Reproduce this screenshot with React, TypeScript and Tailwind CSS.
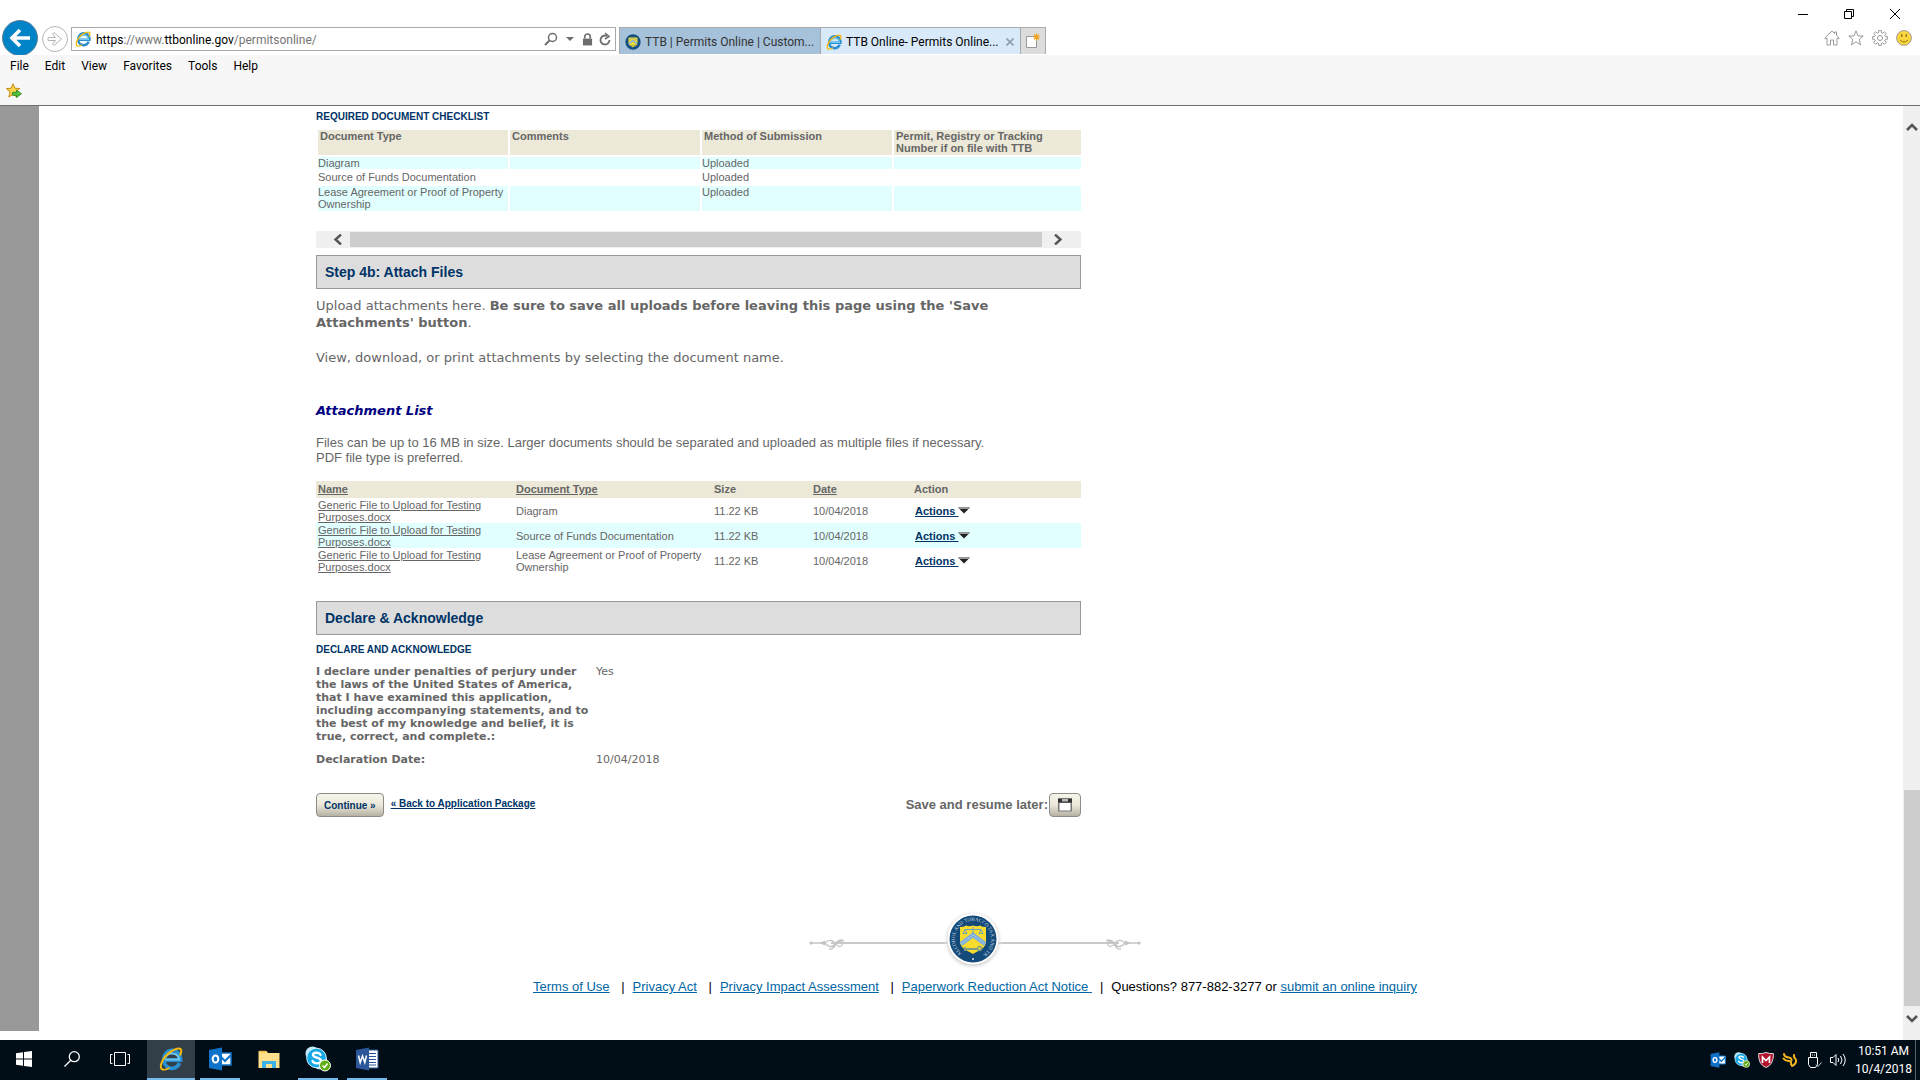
import React from "react";

const ARIAL = "font-['Liberation_Sans',Arial,sans-serif]";
const VERDANA = "font-['DejaVu_Sans',Verdana,sans-serif]";
const UI = "font-['Roboto','Segoe_UI',sans-serif]";

function IeLogo({ className }: { className: string }) {
  return (
    <svg viewBox="0 0 24 24" className={className} aria-hidden="true">
      <path d="M6 13.2h15.600a8.200 8.200 0 0 0-.1-2.200A8 8 0 0 0 5 12.500a8 8 0 0 0 15.500 3.500" fill="none" stroke="#2a8fd0" strokeWidth="3.800" />
      <path d="M6.200 12.600h14a7.300 7.300 0 0 0-14-1.600" fill="none" stroke="#6cc8f3" strokeWidth="2" />
      <path d="M3.200 22.300C.3 20.500 2.300 13.500 7.600 8 13 2.500 19.900.4 21.700 2.300c1 1.100.6 3.200-.5 5.400" fill="none" stroke="#f5b90d" strokeWidth="2" strokeLinecap="round" />
      <path d="M3.200 22.300c1.600 1 4.500.1 6.800-1.300" fill="none" stroke="#f5b90d" strokeWidth="1.600" strokeLinecap="round" />
    </svg>
  );
}

function SealShield() {
  return (
    <g>
      <path d="M-13-12q4 0 6-1.500 3 1.500 7 0 4 1.500 7 0 2 1.500 6 1.500v14C13 9 7 11 0 15-7 11-13 9-13 2z" fill="#f7dc2e" />
      <path d="M-12 5 0-4 12 5" fill="none" stroke="#7fb0dc" strokeWidth="4.500" />
      <path d="M-12 5 0-4 12 5" fill="none" stroke="#e8eef2" strokeWidth="1" strokeDasharray="1 2" />
      <path d="M0-12v7M-8-9.500H8M-8-9.500l-2 4h4zM8-9.500l-2 4h4z" fill="none" stroke="#6fa0bd" strokeWidth="1" />
      <path d="M-8 10H5M-8 8v4" stroke="#7f9c86" strokeWidth="1.800" />
      <circle cx="6.500" cy="9.500" r="2" fill="none" stroke="#7f9c86" strokeWidth="1.400" />
    </g>
  );
}

function SmallSeal() {
  return (
    <svg viewBox="-23 -23 46 46" className="h-4 w-4 shrink-0" aria-hidden="true">
      <circle r="22" fill="#15507e" />
      <SealShield />
    </svg>
  );
}

function FooterOrnament() {
  return (
    <svg viewBox="0 0 332 64" className="h-16 w-[332px]" role="img" aria-label="Alcohol and Tobacco Tax and Trade Bureau seal">
      <defs>
        <radialGradient id="halo">
          <stop offset="0.780" stopColor="#bbb" />
          <stop offset="1" stopColor="#fff" stopOpacity="0" />
        </radialGradient>
        <path id="ring" d="M-11 14.500A18.200 18.200 0 1 1 11 14.500" />
      </defs>
      <path d="M22 36H310" stroke="#c9c9c9" strokeWidth="2" />
      {[0, 1].map((side) => (
        <g key={side} transform={side ? "translate(332 0) scale(-1 1)" : undefined} fill="none" stroke="#c4c4c4">
          <circle cx="2" cy="36" r="1.500" fill="#bbb" stroke="none" />
          <path d="M2 36h14" strokeWidth="1.500" />
          <path d="M10 36l6-2.500v5z" fill="#c4c4c4" stroke="none" />
          <path d="M16 36c4-4 8-3 10 0s5 5 7 2-2-5-5-2-3 7-8 6M16 36c3 4 7 5 10 1s5-5 9-3" strokeWidth="1.300" />
        </g>
      ))}
      <g transform="translate(164 32)">
        <circle cy="1" r="30" fill="url(#halo)" />
        <circle r="25.500" fill="#fff" />
        <circle r="23.500" fill="#134a79" />
        <text fill="#c9d8e4" className="font-['Liberation_Serif',serif] text-[5px]">
          <textPath href="#ring">ALCOHOL AND TOBACCO TAX AND TRADE BUREAU</textPath>
        </text>
        <circle cy="20" r="1" fill="#d6e1ea" />
        <SealShield />
      </g>
    </svg>
  );
}

function BrowserChrome() {
  return (
    <header className={`${UI} shrink-0 text-xs`}>
      <div className="flex h-[55px] items-end">
        <div className="flex h-[35px] w-[71px] shrink-0 items-start gap-1 overflow-hidden pl-0.5">
          <button aria-label="Back" className="flex h-9 w-9 shrink-0 items-center justify-center rounded-full border border-[#5f7f95] bg-[#0083c7]">
            <svg viewBox="0 0 24 24" className="h-6 w-6">
              <path d="M22 12H4M12 4l-8 8 8 8" fill="none" stroke="#fff" strokeWidth="3.600" />
            </svg>
          </button>
          <button aria-label="Forward" className="mt-1.5 flex h-[26px] w-[26px] shrink-0 items-center justify-center rounded-full border border-[#b5b5b5]">
            <svg viewBox="0 0 16 16" className="h-4 w-4">
              <path d="M1 6.500h7.500L5.500 3l1.500-1.500L14.500 8 7 14.500 5.500 13l3-3.500H1z" fill="#fff" stroke="#b5b5b5" />
            </svg>
          </button>
        </div>
        <div className="mb-[4px] flex h-6 w-[545px] shrink items-center border border-[#a9a9a9] bg-white pr-1 pl-[3px]">
          <IeLogo className="h-4 w-4 shrink-0" />
          <div className="ml-[5px] flex-1 pt-0.5 whitespace-nowrap text-[#757575]">
            <span className="text-black">https</span>://www.<span className="text-black">ttbonline.gov</span>/permitsonline/
          </div>
          <button aria-label="Search" className="mr-2">
            <svg viewBox="0 0 14 14" className="h-[14px] w-[14px]" fill="none" stroke="#6d6d6d">
              <circle cx="8.500" cy="5.500" r="4" strokeWidth="1.500" />
              <path d="M5.500 8.500 1 13" strokeWidth="2" />
            </svg>
          </button>
          <svg viewBox="0 0 8 4" className="mr-2 h-1 w-2"><path d="M0 0h8L4 4z" fill="#6d6d6d" /></svg>
          <svg viewBox="0 0 12 14" className="mr-1.5 h-[13px] w-[11px]">
            <path d="M1 6h10v7.500H1z" fill="#6d6d6d" />
            <path d="M3 6V4a3 3 0 0 1 6 0v2" fill="none" stroke="#6d6d6d" strokeWidth="1.800" />
          </svg>
          <button aria-label="Refresh">
            <svg viewBox="0 0 12 14" className="h-[14px] w-[12px]" fill="none" stroke="#6d6d6d" strokeWidth="1.800">
              <path d="M10.500 8A4.500 4.500 0 1 1 8 4" />
              <path d="M6 1l4 3.500L6 7" strokeWidth="1.500" />
            </svg>
          </button>
        </div>
        <div className="mb-px ml-[3px] flex h-[27px] border border-b-0 border-[#a9a9a9]">
          <button className="flex w-[200px] items-center gap-1 bg-[#a6c1da] pt-0.5 pl-[5px] whitespace-nowrap text-[#333]">
            <SmallSeal />TTB | Permits Online | Custom...
          </button>
          <button className="flex w-[200px] items-center gap-1 border-l border-[#a9a9a9] bg-[#d8eafa] pt-0.5 pl-[5px] whitespace-nowrap text-black">
            <IeLogo className="h-4 w-4 shrink-0" />TTB Online- Permits Online...
            <svg viewBox="0 0 8 8" className="mr-[6px] ml-auto h-2 w-2 shrink-0"><path d="M.5.5l7 7m0-7l-7 7" stroke="#8f9dab" strokeWidth="1.600" /></svg>
          </button>
          <button aria-label="New tab" className="flex w-[25px] items-center justify-center border-l border-[#a9a9a9] bg-[#dcdcdc]">
            <svg viewBox="0 0 16 16" className="h-4 w-4">
              <path d="M1.500 3.500h10v11h-10z" fill="#fff" stroke="#999" />
              <path d="M11.500.5v7M8 4h7M9 1.500l5 5m0-5-5 5" stroke="#f2a31b" strokeWidth="1.100" />
            </svg>
          </button>
        </div>
        <div className="ml-auto flex h-full shrink-0 flex-col items-end">
          <div className="flex h-7 items-center gap-9 pr-5">
            <button aria-label="Minimize"><svg viewBox="0 0 10 10" className="h-[10px] w-[10px]"><path d="M0 5.500h10" stroke="#000" /></svg></button>
            <button aria-label="Restore"><svg viewBox="0 0 10 10" className="h-[10px] w-[10px]"><path d="M.5 2.500h7v7h-7zM2.500 2V.5h7v7H8" fill="none" stroke="#000" /></svg></button>
            <button aria-label="Close"><svg viewBox="0 0 10 10" className="h-[10px] w-[10px]"><path d="M0 0l10 10M10 0L0 10" stroke="#000" /></svg></button>
          </div>
          <div className="flex items-center gap-2 pt-0.5 pr-2">
            <button aria-label="Home"><svg viewBox="0 0 16 16" className="h-4 w-4"><path d="M.7 8 8 1l2.500 2.400V2h2v3.300L15.300 8l-1 1-1.300-1v7H9.500v-5h-3v5H3V8L1.700 9z" fill="none" stroke="#999" /></svg></button>
            <button aria-label="Favorites"><svg viewBox="0 0 16 16" className="h-4 w-4"><path d="M8 .8l2 5.200h5.300l-4.200 3.400 1.600 5.600L8 11.800 3.300 15l1.600-5.600L.7 6H6z" fill="none" stroke="#999" /></svg></button>
            <button aria-label="Tools"><svg viewBox="0 0 16 16" className="h-4 w-4" fill="none" stroke="#999"><path d="M6.700.6h2.600v2l1.400.6L12.300 1.700l2 2-1.500 1.600.6 1.400h2v2.600h-2l-.6 1.400 1.500 1.600-2 2-1.600-1.500-1.400.6v2H6.700v-2l-1.400-.6-1.600 1.500-2-2 1.500-1.600-.6-1.400h-2V6.700h2l.6-1.400L1.700 3.700l2-2 1.600 1.500 1.400-.6z" /><circle cx="8" cy="8" r="2.500" /></svg></button>
            <button aria-label="Send a smile"><svg viewBox="0 0 16 16" className="h-4 w-4"><circle cx="8" cy="8" r="7.400" fill="#fbd63f" stroke="#9b9b9b" /><path d="M5.700 4v3M10.300 4v3" stroke="#9a7d1c" strokeWidth="1.500" /><path d="M4 10q4 4 8 0" fill="none" stroke="#9a7d1c" /></svg></button>
          </div>
        </div>
      </div>
      <div className="h-[51px] border-b border-[#6d6d6d] bg-[#f7f7f7]">
        <nav className="flex h-[22px] items-center gap-4 pl-[10px] text-black">
          {["File", "Edit", "View", "Favorites", "Tools", "Help"].map((m) => (
            <button key={m}>{m}</button>
          ))}
        </nav>
        <button aria-label="Add to favorites bar" className="mt-1.5 ml-1.5 block">
          <svg viewBox="0 0 16 16" className="h-4 w-4">
            <path d="M7 .8l1.900 4.400 4.800.4L10 9l1.200 5L7 11.500 2.800 14 4 9 .5 5.600l4.700-.4z" fill="#fbd44c" stroke="#c78a14" />
            <path d="M6.500 9.300h4V7l5 3.800-5 3.800v-2.300h-4z" fill="#4fc13c" stroke="#2a8524" strokeWidth="0.800" />
          </svg>
        </button>
      </div>
    </header>
  );
}

const checklist = [
  { type: "Diagram", rowClass: "h-3 bg-[#e2ffff]" },
  { type: "Source of Funds Documentation", rowClass: "h-[13px]" },
  { type: "Lease Agreement or Proof of Property Ownership", rowClass: "h-[25px] bg-[#e2ffff]" },
];

function ChecklistTable() {
  return (
    <table className="mt-[5px] w-[calc(100%+2px)] table-fixed border-separate border-spacing-[2px] text-left align-top text-[11px] leading-3">
      <thead>
        <tr className="h-[25px] align-top">
          <th className="w-[190px] bg-[#ece9d8] px-0.5">Document Type</th>
          <th className="w-[190px] bg-[#ece9d8] px-0.5">Comments</th>
          <th className="w-[190px] bg-[#ece9d8] px-0.5">Method of Submission</th>
          <th className="bg-[#ece9d8] pr-6 pl-0.5">Permit, Registry or Tracking Number if on file with TTB</th>
        </tr>
      </thead>
      <tbody>
        {checklist.map((r) => (
          <tr key={r.type} className="align-top">
            <td className={r.rowClass}>{r.type}</td>
            <td className={r.rowClass} />
            <td className={r.rowClass}>Uploaded</td>
            <td className={r.rowClass} />
          </tr>
        ))}
      </tbody>
    </table>
  );
}

function AttachmentTable() {
  return (
    <table className="mt-4 w-full table-fixed border-collapse text-left text-[11px] leading-[13px]">
      <thead>
        <tr className="h-[17px] bg-[#ece9d8]">
          <th className="w-[200px] pl-0.5"><a href="#name" className="underline">Name</a></th>
          <th className="w-[198px]"><a href="#type" className="underline">Document Type</a></th>
          <th className="w-[99px]">Size</th>
          <th className="w-[101px]"><a href="#date" className="underline">Date</a></th>
          <th>Action</th>
        </tr>
      </thead>
      <tbody>
        {["Diagram", "Source of Funds Documentation", "Lease Agreement or Proof of Property Ownership"].map((t) => (
          <tr key={t} className="h-[25px] leading-3 even:bg-[#e2ffff]">
            <td className="pr-7 pl-0.5"><a href="#file" className="underline">Generic File to Upload for Testing Purposes.docx</a></td>
            <td>{t}</td>
            <td>11.22 KB</td>
            <td>10/04/2018</td>
            <td className="pl-px">
              <button className="flex items-center font-bold text-[#003366]">
                <span className="whitespace-pre underline">Actions </span>
                <svg viewBox="0 0 12 7" className="h-[7px] w-3"><path d="M0 .5h12L6 6.500z" fill="#222" /><path d="M0 .5h12L10.500 2h-9z" fill="#999" /></svg>
              </button>
            </td>
          </tr>
        ))}
      </tbody>
    </table>
  );
}

function SectionBar({ children }: { children: React.ReactNode }) {
  return (
    <h2 className="flex h-[34px] items-center border border-[#999] bg-[#ddd] pl-2 text-sm font-bold text-[#003366]">{children}</h2>
  );
}

function PageContent() {
  return (
    <main className={`${ARIAL} min-w-0 flex-1 text-[#666]`}>
      <div className="ml-[277px] max-w-[765px] pt-[5px]">
        <h3 className="text-[10px] leading-3 font-bold text-[#003366]">REQUIRED DOCUMENT CHECKLIST</h3>
        <ChecklistTable />
        <div className="mt-[18px] mb-[7px] flex h-[17px] items-center bg-[#f0f0f0]">
          <button aria-label="Scroll left" className="flex w-[34px] justify-end pr-2">
            <svg viewBox="0 0 9 11" className="h-[11px] w-[9px]"><path d="M8 .5 2.500 5.500 8 10.500" fill="none" stroke="#555" strokeWidth="2.400" /></svg>
          </button>
          <div className="h-[15px] flex-1 bg-[#cdcdcd]" />
          <button aria-label="Scroll right" className="flex w-[39px] pl-3">
            <svg viewBox="0 0 9 11" className="h-[11px] w-[9px]"><path d="M1 .5l5.500 5L1 10.500" fill="none" stroke="#555" strokeWidth="2.400" /></svg>
          </button>
        </div>
        <SectionBar>Step 4b: Attach Files</SectionBar>
        <div className={`${VERDANA} mt-2 text-[13px] leading-[17px]`}>
          <p>Upload attachments here. <b>Be sure to save all uploads before leaving this page using the 'Save Attachments' button</b>.</p>
          <p className="mt-[18px]">View, download, or print attachments by selecting the document name.</p>
          <h3 className="mt-9 font-bold text-[#000080] italic">Attachment List</h3>
        </div>
        <p className="mt-4 pr-20 text-[13px] leading-[15px]">
          Files can be up to 16 MB in size. Larger documents should be separated and uploaded as multiple files if necessary. PDF file type is preferred.
        </p>
        <AttachmentTable />
        <div className="mt-7"><SectionBar>Declare &amp; Acknowledge</SectionBar></div>
        <h3 className="mt-[9px] text-[10px] leading-3 font-bold text-[#003366]">DECLARE AND ACKNOWLEDGE</h3>
        <dl className={`${VERDANA} mt-[9px] grid grid-cols-[280px_1fr] gap-y-[10px] text-[11px] leading-[13px]`}>
          <dt className="font-bold">
            I declare under penalties of perjury under the laws of the United States of America, that I have examined this application, including accompanying statements, and to the best of my knowledge and belief, it is true, correct, and complete.:
          </dt>
          <dd>Yes</dd>
          <dt className="font-bold">Declaration Date:</dt>
          <dd>10/04/2018</dd>
        </dl>
        <div className="mt-[27px] flex h-6 items-center">
          <button className="h-6 rounded-sm border border-[#8d8c86] bg-linear-to-b from-[#f7f5ea] via-[#ebe8da] to-[#b5b2a4] px-[7px] text-[10px] font-bold text-[#003366]">Continue »</button>
          <a href="#back" className="mb-1 ml-[7px] text-[10px] font-bold text-[#003366] underline">« Back to Application Package</a>
          <span className="ml-auto text-[13px] font-bold">Save and resume later:</span>
          <button aria-label="Save and resume later" className="ml-px flex h-6 w-8 items-center justify-center rounded-sm border border-[#8d8c86] bg-linear-to-b from-[#f7f5ea] via-[#ebe8da] to-[#b5b2a4]">
            <svg viewBox="0 0 16 16" className="h-4 w-4"><path d="M1 1.500h14v13H1z" fill="#777" /><path d="M1 1.500h14v4H1z" fill="#333" /><path d="M2.500 6h11v7.500h-11z" fill="#fff" /><path d="M5 2h6v2.500H5z" fill="#bbb" /></svg>
          </button>
        </div>
      </div>
      <footer className="mt-[90px] flex flex-col items-center pl-2">
        <FooterOrnament />
        <div className="mt-2 flex gap-2 text-[13px] leading-[15px] whitespace-pre text-black">
          <a href="#terms" className="text-[#0066a4] underline">Terms of Use</a>
          <span> |</span>
          <a href="#privacy" className="text-[#0066a4] underline">Privacy Act</a>
          <span> |</span>
          <a href="#impact" className="text-[#0066a4] underline">Privacy Impact Assessment</a>
          <span> |</span>
          <a href="#paperwork" className="text-[#0066a4] underline">Paperwork Reduction Act Notice </a>
          <span>|</span>
          <span>Questions? 877-882-3277 or <a href="#inquiry" className="text-[#0066a4] underline">submit an online inquiry</a></span>
        </div>
      </footer>
    </main>
  );
}

function OutlookIcon({ className }: { className: string }) {
  return (
    <svg viewBox="0 0 24 24" className={className} aria-hidden="true">
      <path d="M11 6h12v12H11z" fill="#fff" stroke="#0f72c9" strokeWidth="1.500" />
      <path d="M12 9l5 5 6-6" fill="none" stroke="#0f72c9" strokeWidth="2" />
      <path d="M1 3l13-2.500v23L1 21z" fill="#0f72c9" />
      <ellipse cx="7.500" cy="12" rx="2.800" ry="3.600" fill="none" stroke="#fff" strokeWidth="2" />
    </svg>
  );
}

function SkypeIcon({ className }: { className: string }) {
  return (
    <svg viewBox="0 0 26 26" className={className} aria-hidden="true">
      <circle cx="7.500" cy="7.500" r="7" fill="#bfe9fa" />
      <circle cx="15" cy="16" r="7.500" fill="#bfe9fa" />
      <circle cx="11.500" cy="12" r="9.800" fill="#16a9e8" stroke="#d6f2fd" />
      <path d="M15.500 8.800C14 6 8 6 8 9s8 2.200 8 5.700-7 3.600-8.500.4" fill="none" stroke="#fff" strokeWidth="2.400" strokeLinecap="round" />
      <circle cx="20" cy="19.500" r="5.500" fill="#5fae12" stroke="#fff" />
      <path d="M17.500 19.500l2 2 3-4" fill="none" stroke="#fff" strokeWidth="1.500" />
    </svg>
  );
}

function TaskButton({ label, open, active, children }: { label: string; open?: boolean; active?: boolean; children: React.ReactNode }) {
  return (
    <button aria-label={label} className={active ? "ml-[3px] flex w-12 flex-col items-center bg-[#333f48]" : open === undefined ? "flex w-12 flex-col items-center" : "flex w-[49px] flex-col items-center"}>
      <span className="flex flex-1 items-center">{children}</span>
      <span className={active ? "h-0.5 w-full bg-[#76b9ed]" : open ? "h-0.5 w-10 bg-[#76b9ed]" : "h-0.5"} />
    </button>
  );
}

function Taskbar() {
  return (
    <div className={`${UI} flex h-10 shrink-0 bg-[#010e18] text-xs text-white`}>
      <TaskButton label="Start"><svg viewBox="0 0 16 16" className="h-4 w-4"><path d="M0 2.300 7 1.300v6.200H0zM8 1.100 16 0v7.500H8zM0 8.500h7v6.200l-7-1zM8 8.500h8V16l-8-1.100z" fill="#fff" /></svg></TaskButton>
      <TaskButton label="Search"><svg viewBox="0 0 16 16" className="h-4 w-4" fill="none" stroke="#fff" strokeWidth="1.300"><circle cx="10.300" cy="5.700" r="5" /><path d="M6.800 9.200.5 15.500" /></svg></TaskButton>
      <TaskButton label="Task view"><svg viewBox="0 0 20 16" className="h-4 w-5" fill="none" stroke="#fff"><path d="M4.500 1.500h11v13h-11zM2.500 3.500h-2v9h2M17.500 3.500h2v9h-2" /></svg></TaskButton>
      <TaskButton label="Internet Explorer" active><IeLogo className="h-6 w-6" /></TaskButton>
      <TaskButton label="Outlook" open><OutlookIcon className="h-6 w-6" /></TaskButton>
      <TaskButton label="File Explorer" open={false}>
        <svg viewBox="0 0 22 20" className="h-5 w-[22px]"><path d="M.5 2h8l1.500 2h11.500v15H.5z" fill="#ffe08a" /><path d="M1.500 2.500H8" stroke="#f0b93c" strokeWidth="1.500" /><path d="M4 19v-7h14v7h-4v-4H8v4z" fill="#3cb4ea" /></svg>
      </TaskButton>
      <TaskButton label="Skype" open><SkypeIcon className="h-[26px] w-[26px]" /></TaskButton>
      <TaskButton label="Word" open>
        <svg viewBox="0 0 24 24" className="h-6 w-6"><path d="M12 3h11v18H12z" fill="#fff" stroke="#2b579a" /><path d="M14 6.500h7M14 9.500h7M14 12.500h7M14 15.500h7M14 18h7" stroke="#2b579a" /><path d="M1 3l13-2.500v23L1 21z" fill="#2b579a" /><path d="M3.500 8.500l1.700 7 2.300-6.500 2.300 6.500 1.700-7" fill="none" stroke="#fff" strokeWidth="1.500" /></svg>
      </TaskButton>
      <div className="ml-auto flex items-center gap-2 pr-1.5">
        <OutlookIcon className="h-4 w-4" />
        <SkypeIcon className="h-4 w-4" />
        <svg viewBox="0 0 16 16" className="h-4 w-4"><path d="M.7 1.500Q4 2 8 .5q4 1.500 7.300 1C15.500 8 14 13 8 15.500 2 13 .5 8 .7 1.500z" fill="#b5122e" stroke="#ddd" /><path d="M4.500 11V5L8 8.500 11.500 5v6" fill="none" stroke="#fff" strokeWidth="1.700" /></svg>
        <svg viewBox="0 0 16 16" className="h-4 w-4" fill="none" stroke="#f4b71d" strokeWidth="2" strokeLinecap="round"><path d="M2 2c0 3 2 3 4.500 3.500S10 7 9.500 8.500M1.500 6.500C3 9 5 8.500 7 9s2.500 2 2 3.500M12 3c-1 2.500 1.500 3 2 5s-1 5-4 6" /></svg>
        <svg viewBox="0 0 16 16" className="h-4 w-4" fill="none" stroke="#fff"><path d="M4.500 5V.5h6V5M2.500 5.500h9v7l-2 3h-5l-2-3zM6 3h1M8 3h1" /><path d="M10 12.500l2 2 3.500-4" stroke="#ccc" /></svg>
        <svg viewBox="0 0 16 16" className="h-4 w-4" fill="none" stroke="#fff"><path d="M.5 5.500h2.500l3-3v11l-3-3H.5zM8 6q1.500 2 0 4M10.500 4q3 4 0 8M13 2q4.500 6 0 12" /></svg>
      </div>
      <div className="w-[63px] pt-0.5 text-center leading-[18px] whitespace-nowrap"><div>10:51 AM</div><div>10/4/2018</div></div>
      <div className="h-10 w-[5px] border-l border-[#56606a]" />
    </div>
  );
}

export default function App() {
  return (
    <div className="flex min-h-screen flex-col bg-white">
      <BrowserChrome />
      <div className="flex flex-1">
        <div className="mb-[9px] w-[39px] shrink-0 bg-[#999]" />
        <PageContent />
        <div className="flex w-[17px] shrink-0 flex-col items-center bg-[#f0f0f0] py-4">
          <svg viewBox="0 0 12 10" className="h-[10px] w-3"><path d="M1 8l5-5 5 5" fill="none" stroke="#555" strokeWidth="2.600" /></svg>
          <div className="mt-auto mb-2 h-[216px] w-4 bg-[#cdcdcd]" />
          <svg viewBox="0 0 12 10" className="h-[10px] w-3"><path d="M1 2l5 5 5-5" fill="none" stroke="#555" strokeWidth="2.600" /></svg>
        </div>
      </div>
      <Taskbar />
    </div>
  );
}
